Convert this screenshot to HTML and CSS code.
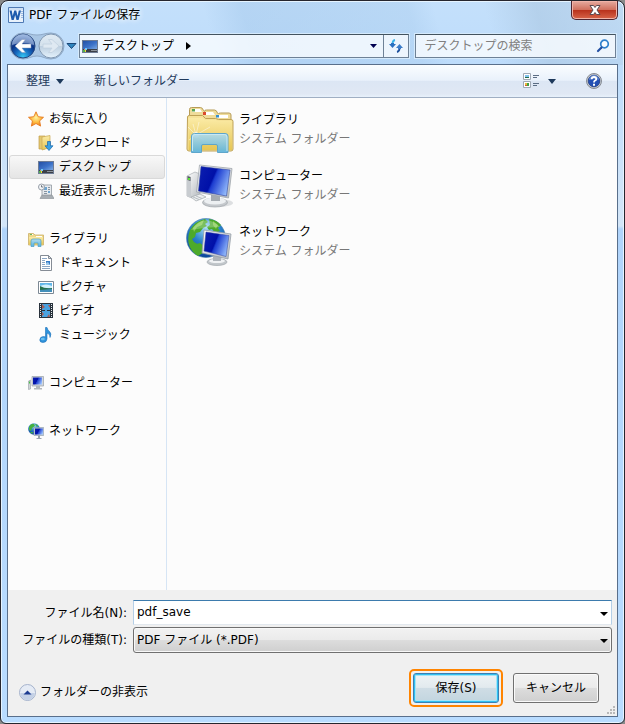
FILE: index.html
```html
<!DOCTYPE html>
<html lang="ja">
<head>
<meta charset="utf-8">
<meta name="viewport" content="width=device-width, initial-scale=1">
<title>PDF ファイルの保存</title>
<link rel="stylesheet" href="styles.css">
</head>
<body>
<svg class="defs" width="0" height="0" aria-hidden="true">
  <defs>
    <linearGradient id="screen" x1="0" y1=".3" x2="1" y2=".7"><stop offset="0" stop-color="#0a1cae"/><stop offset=".42" stop-color="#0010a8"/><stop offset=".48" stop-color="#1c3cd0"/><stop offset="1" stop-color="#9cc4ff"/></linearGradient>
    <linearGradient id="folder" x1="0" y1="0" x2="0" y2="1"><stop offset="0" stop-color="#fbeba6"/><stop offset="1" stop-color="#e6c655"/></linearGradient>
    <linearGradient id="glass" x1="0" y1="0" x2="0" y2="1"><stop offset="0" stop-color="#b4dcea"/><stop offset="1" stop-color="#58b4e2"/></linearGradient>
    <linearGradient id="metal" x1="0" y1="0" x2="1" y2="1"><stop offset="0" stop-color="#fff"/><stop offset="1" stop-color="#b4b9be"/></linearGradient>
    <linearGradient id="desk" x1="0" y1="0" x2="1" y2="1"><stop offset="0" stop-color="#2450a4"/><stop offset=".55" stop-color="#3c72c8"/><stop offset="1" stop-color="#7ba8e2"/></linearGradient>
    <radialGradient id="globe" cx=".5" cy=".25" r=".8"><stop offset="0" stop-color="#a4dcf4"/><stop offset=".45" stop-color="#2a82cc"/><stop offset="1" stop-color="#063a94"/></radialGradient>
    <radialGradient id="back" cx=".5" cy=".95" r=".95"><stop offset="0" stop-color="#35c8f4"/><stop offset=".35" stop-color="#1567bd"/><stop offset=".62" stop-color="#0a3285"/><stop offset="1" stop-color="#7fa3da"/></radialGradient>
    <linearGradient id="fwd" x1="0" y1="0" x2="0" y2="1"><stop offset="0" stop-color="#e0ebf4"/><stop offset=".48" stop-color="#d4e1ec"/><stop offset=".5" stop-color="#bccedf"/><stop offset="1" stop-color="#e4f2fc"/></linearGradient>
    <radialGradient id="star" cx=".5" cy=".4" r=".6"><stop offset="0" stop-color="#fff4a0"/><stop offset=".6" stop-color="#fdb83c"/><stop offset="1" stop-color="#f08024"/></radialGradient>
    <symbol id="i-desktop" viewBox="0 0 16 13"><path fill="#6e7c94" d="M0 0h16v13H0z"/><path fill="url(#desk)" d="M1 1h14v8H1z"/><path fill="#3c4048" d="M1 9h14v3H1z"/><path fill="#8d949c" d="M9 10h6v1H9z"/><path fill="#52b548" d="M1 10h2v2H1z"/><path fill="#f8d33d" d="M3 10h1v2H3z"/><path fill="#ee8a5c" d="M2 9h1v1H2z"/><path fill="#73cbf4" d="M3 8h2v2H3z"/></symbol>
  </defs>
</svg>

<main class="window">
  <header class="titlebar">
    <svg class="word" width="16" height="16" viewBox="0 0 16 16"><path fill="#e8f1fb" stroke="#4f7ab4" d="M.5.5h15v15H.5z"/><path fill="#cfe0f4" d="M1 1h14v2H1z"/><path fill="#9cbbe2" d="M13 4h2v1h-2zM13 6h2v1h-2zM13 8h2v1h-2zM13 10h2v1h-2z"/><path fill="#1f5cae" d="M1.500 3.500h2.200L4.700 9 6.300 3.500h1.900L9.600 9l1.200-5.500H13L10.600 13H8.500L7.200 8 5.700 13H3.600z"/></svg>
    <h1>PDF ファイルの保存</h1>
    <button class="close" type="button" aria-label="閉じる"><svg width="12" height="10" viewBox="0 0 12 10"><path fill="#fff" stroke="#5b4a50" d="M1 .5h3.500L6 2.500 7.500 .5H11L8 5l3 4.500H7.500L6 7.500 4.500 9.500H1L4 5z"/></svg></button>
  </header>

  <nav class="navbar">
    <div class="history">
      <svg class="rail" width="56" height="28" viewBox="0 0 56 28" aria-hidden="true"><path fill="#a9c6e4" stroke="#8fa9c6" d="M14 1C20 1 22 3 28 3S36 1 42 1a13 13 0 0 1 0 26C36 27 34 24 28 24S20 27 14 27A13 13 0 0 1 14 1z"/></svg>
      <button type="button" aria-label="戻る"><svg width="26" height="26" viewBox="0 0 26 26"><circle cx="13" cy="13" r="12" fill="url(#back)" stroke="#26477f"/><path fill="#c7daf2" fill-opacity=".5" d="M2 12a11 11 0 0 1 22 0q-11-4-22 0z"/><path fill="#fff" stroke="#8499bd" stroke-width=".5" d="M5 13l7-6.500h3.500L12 11h9v4h-9l3.500 4.500H12z"/></svg></button>
      <button type="button" aria-label="進む"><svg width="26" height="26" viewBox="0 0 26 26"><circle cx="13" cy="13" r="12" fill="url(#fwd)" stroke="#8198b2"/><path fill="#dfe9f2" stroke="#c2d1df" stroke-width=".8" d="M21 13l-7-6.500h-3.500L14 11H5v4h9l-3.500 4.500H14z"/></svg></button>
      <button class="recent" type="button" aria-label="最近のページ"><svg width="11" height="8" viewBox="0 0 11 8"><path fill="#2f86c0" stroke="#1b4777" d="M1 1.500h9l-4.500 5z"/></svg></button>
    </div>
    <div class="address">
      <svg width="16" height="13"><use href="#i-desktop"/></svg>
      <a href="#desktop">デスクトップ</a>
      <svg class="crumb" width="5" height="8" viewBox="0 0 5 8"><path d="M0 0l5 4-5 4z"/></svg>
      <button class="drop" type="button" aria-label="以前の場所"><svg width="7" height="4" viewBox="0 0 7 4"><path fill="#000050" d="M0 0h7L3.500 4z"/></svg></button>
      <button class="refresh" type="button" aria-label="更新"><svg width="14" height="14" viewBox="0 0 14 14"><path fill="none" stroke="#39b4e8" stroke-width="1.800" d="M6 1Q3.500 1.500 3.500 5"/><path fill="#2a70c0" d="M0 5h2V4h3v1h2L3.500 9z"/><path fill="none" stroke="#1c4f9c" stroke-width="1.800" d="M8 13q2.500-.5 2.500-4"/><path fill="#3c7cc8" d="M7 9h2v1h3V9h2l-3.500-4z"/></svg></button>
    </div>
    <label class="search">
      <input type="search" aria-label="デスクトップの検索" placeholder="デスクトップの検索">
      <svg width="14" height="14" viewBox="0 0 14 14"><circle cx="8.500" cy="5" r="3.800" fill="#fff" fill-opacity=".7" stroke="#2f80cc" stroke-width="1.700"/><path stroke="#234fa2" stroke-width="2.200" stroke-linecap="round" d="M5.500 8.500L2 12"/></svg>
    </label>
  </nav>

  <section class="client">
    <div class="toolbar">
      <button type="button">整理<svg width="8" height="5" viewBox="0 0 8 5"><path fill="#1e395b" d="M0 0h8L4 5z"/></svg></button>
      <button type="button">新しいフォルダー</button>
      <button class="view" type="button" aria-label="表示の変更"><svg width="16" height="16" viewBox="0 0 16 16"><path fill="#fff" stroke="#a0a9b4" d="M.5.5h7v6h-7zM.5 8.500h7v6h-7z"/><path fill="#7ec1ec" d="M2 2h4v2H2z"/><path fill="#246a4a" d="M2 4h4v1H2z"/><path fill="#e7b93c" d="M2 10h2v2H2z"/><path fill="#42a044" d="M4 10h2v3H4z"/><path fill="#d05a38" d="M2 12h2v1H2z"/><path stroke="#5b6d84" d="M10 2.500h6M10 4.500h4M10 10.500h6M10 12.500h4"/></svg><svg width="8" height="5" viewBox="0 0 8 5"><path fill="#1e395b" d="M0 0h8L4 5z"/></svg></button>
      <button class="help" type="button" aria-label="ヘルプ"><svg width="16" height="16" viewBox="0 0 16 16"><circle cx="8" cy="8" r="7.500" fill="#c4c8ce" stroke="#868c95"/><circle cx="8" cy="8" r="5.800" fill="#2350b4" stroke="#1a3680" stroke-width=".7"/><path fill="#7fa6e4" fill-opacity=".6" d="M3 7a5 5 0 0 1 10 0q-5-2-10 0z"/><path fill="none" stroke="#fff" stroke-width="1.800" d="M5.700 6.200Q5.700 4 8 4T10.300 6Q10.300 7 8.800 7.800 8 8.300 8 9.500"/><path fill="#fff" d="M7 10.700h2v2H7z"/></svg></button>
    </div>

    <div class="panes">
      <aside class="tree">
        <section>
          <a class="root" href="#fav"><svg width="16" height="16" viewBox="0 0 16 16"><path fill="url(#star)" stroke="#e57a20" stroke-width=".9" stroke-linejoin="round" d="M8 .8l2.200 4.900 5.300.6-3.900 3.600 1 5.200L8 12.500l-4.600 2.600 1-5.200L.5 6.300l5.300-.6z"/></svg>お気に入り</a>
          <a href="#downloads"><svg width="16" height="16" viewBox="0 0 16 16"><path fill="#e3c870" stroke="#c09c48" stroke-width=".7" d="M1 1h6v13H1z"/><path fill="url(#folder)" stroke="#c9a850" stroke-width=".7" d="M4 2l8-1.500v12L4 15z"/><path fill="#3aa2e6" stroke="#1a65a9" stroke-width=".7" d="M9.500 6.500h3v4.300H15L11 15.500 7 10.800h2.500z"/></svg>ダウンロード</a>
          <a class="selected" href="#desktop" aria-current="true"><svg width="16" height="13"><use href="#i-desktop"/></svg>デスクトップ</a>
          <a href="#recent"><svg width="16" height="16" viewBox="0 0 16 16"><path fill="#e6eaee" stroke="#9098a0" stroke-width=".8" d="M4 2h9.500v10.500H4z"/><path fill="#6ea5d0" d="M6 4h3v3H6zM10 8h2v2h-2z"/><path stroke="#8794a1" d="M10 4.500h2M10 6.500h2M6 8.500h3M6 10.500h3"/><path fill="#a7adb3" stroke="#868d94" stroke-width=".6" d="M4 12h10l2 3.500H2z"/><circle cx="3.500" cy="4" r="3" fill="#f4f6f8" stroke="#979fa8"/><path fill="none" stroke="#525b66" stroke-width=".8" d="M3.500 2.200V4h1.700"/></svg>最近表示した場所</a>
        </section>
        <section>
          <a class="root" href="#libraries"><svg width="16" height="16" viewBox="0 0 16 16"><path fill="#efd98a" stroke="#cbb068" stroke-width=".8" d="M.5 4V2.500h5L7 4h8.500v10H.5z"/><path fill="#fff" d="M2 3h3v1H2zM8 5h6v1H8z"/><path fill="#69b75e" d="M2 3h2v1H2z"/><path fill="url(#folder)" d="M1 6h14v7.500H1z"/><path fill="url(#glass)" stroke="#4ea0c8" stroke-width=".7" d="M3 15.500V10q0-2 2-2h6q2 0 2 2v5.500h-3V12H6v3.500z"/></svg>ライブラリ</a>
          <a href="#documents"><svg width="16" height="16" viewBox="0 0 16 16"><path fill="#fff" stroke="#858c95" d="M2.500.5h8l3 3v12h-11z"/><path fill="#dde3ea" stroke="#858c95" d="M10.500.5v3h3z"/><path stroke="#8ba6c4" d="M4 3.500h5M4 5.500h3M4 7.500h3M4 9.500h3M4 11.500h8M4 13.500h8"/><path fill="#367cc7" d="M8 6h4v4H8z"/><path fill="#9cc8ec" d="M8 8l2-1 2 3H8z"/></svg>ドキュメント</a>
          <a href="#pictures"><svg width="16" height="13" viewBox="0 0 16 13"><path fill="#fff" stroke="#7c8894" d="M.5.5h15v12H.5z"/><path fill="#62b7ea" d="M2 2h12v9H2z"/><path fill="#d2f0fb" d="M2 5q6-3 12 0v2H2z"/><path fill="#26714d" d="M2 5q5 3 12 2v2H2z"/><path fill="#438fba" d="M2 9l12-1v3H2z"/></svg>ピクチャ</a>
          <a href="#videos"><svg width="16" height="16" viewBox="0 0 16 16"><path fill="#29323c" d="M1 0h14v15H1z"/><path fill="#4aa2e0" d="M4 1h8v13H4z"/><path fill="#a85c54" d="M4 1l3 3-3 2zM10 2h2v3zM4 9l2 2-2 2zM9 14l2-3 1 3z"/><path fill="#29323c" d="M4 7h3v1H4zM9 7h3v1H9z"/><path stroke="#e4e9ee" stroke-dasharray="1 1" d="M2.500 1v13M13.500 1v13"/></svg>ビデオ</a>
          <a href="#music"><svg width="16" height="16" viewBox="0 0 16 16"><path fill="#2f93dc" stroke="#1e70b9" stroke-width=".6" d="M7.500.5H9q.5 2.500 2.500 4Q14 6.500 12 10.500q.5-3.500-3-4.500V12Q8.500 15.500 5 15.500q-3.200 0-3.200-2.500 0-3.200 3.700-3.500 1.300 0 2 .5z"/><ellipse cx="4.800" cy="12" rx="2" ry="1.200" fill="#6cc0f0"/></svg>ミュージック</a>
        </section>
        <section>
          <a class="root" href="#computer"><svg width="16" height="14" viewBox="0 0 16 14"><path fill="#cfd3d6" stroke="#969da4" stroke-width=".6" d="M.5 5l2-1v9l-2 .5z"/><path fill="#45bd42" d="M1 5.500h1v2H1z"/><path fill="#d4d8dc" stroke="#979fa7" stroke-width=".7" d="M4 .5h11.500v9.500H4z"/><path fill="url(#screen)" d="M5 1.500h9v7H5z"/><path fill="#b1b7bc" d="M8 10h4v2h2v1.500H6V12h2z"/></svg>コンピューター</a>
        </section>
        <section>
          <a class="root" href="#network"><svg width="16" height="16" viewBox="0 0 16 16"><circle cx="6" cy="6" r="5.800" fill="url(#globe)"/><path fill="#45b13f" d="M1 4q2-4 5-3L7 3 4 5 3 8 1 7zM7 1l3 1-1 2zM2 9l3 0-1 2z"/><path fill="#c4ccd4" stroke="#8a9aaa" stroke-width=".6" d="M6 4.500h9.700v8H6z"/><path fill="url(#screen)" d="M7 5.500h8v6H7z"/><path fill="#9aa4ad" d="M10 12.500h2V15h1.500v1H8.500v-1H10z"/></svg>ネットワーク</a>
        </section>
      </aside>

      <ul class="files">
        <li>
          <svg width="48" height="48" viewBox="0 0 48 48"><path fill="#efdc9a" stroke="#b79c58" d="M3.500 40V3.500q0-2 2-2h9q2 0 3 3l1 1V5q0-1 2-1h8q2 0 3 3l1 1q0-1 2-1h8.500q2 0 2 2v31z"/><path fill="#fff" d="M6 3h8l2 3H6zM18 6h9l2 3H18zM31 9h11v3H31z"/><path fill="#57a552" d="M6 3h3v2.500H6z"/><path fill="#db4b2c" d="M17 6h3v3h-3z"/><path fill="#338fd0" d="M30 9h3v2.500h-3z"/><path fill="#f6e298" stroke="#bfa256" d="M1.500 11q0-1.500 2-1.500h13l3 3h10l3 1H45q2 0 2 2V43q0 2-2 2H3q-2 0-2-2z"/><path fill="url(#folder)" d="M2.500 12h14l3 2h10l3 1H46v29H2.500z"/><path stroke="#fff" stroke-opacity=".45" d="M10 29L2 21M10 29l3-13M10 29l14-8M10 29l-7 5M10 29l8 5M10 29L7 18"/><circle cx="10" cy="29" r="3" fill="#fff" fill-opacity=".6"/><path fill="url(#glass)" fill-opacity=".9" stroke="#5ea6cb" d="M5.500 46.500V30q0-2.500 3-2.500H39q3 0 3 2.500v16.500H31.500V40q0-1.500-1.500-1.500H17q-1.500 0-1.500 1.500v6.500z"/><path fill="none" stroke="#c8e8f4" d="M6.500 45V31q0-2.500 2.500-2.500h29.500q2.500 0 2.500 2.500v14"/></svg>
          <div class="meta"><a href="#libraries">ライブラリ</a><span>システム フォルダー</span></div>
        </li>
        <li>
          <svg width="48" height="44" viewBox="0 0 48 44"><ellipse cx="32" cy="39" rx="15" ry="4" fill="#c8cbce" fill-opacity=".6"/><path fill="url(#metal)" stroke="#a8adb2" stroke-width=".7" d="M1 12l8-4 5 2v21l-8 3-5-2z"/><path fill="#c8ccd0" d="M1 12l4 1v21l-4-2z"/><path fill="#555c62" d="M1.500 12l3 1v4l-3-1z"/><path fill="#5be336" d="M2 14h2v2H2z"/><path fill="#eceeef" stroke="#a4a9ae" stroke-width=".7" d="M5 33l9-3 6 3-10 4z"/><path stroke="#b8bec3" d="M7 33l6 2.500M10 32l6 2.500"/><ellipse cx="29" cy="38.500" rx="12.500" ry="4.500" fill="#c4c8cc" stroke="#a2a7ac" stroke-width=".7"/><ellipse cx="29" cy="37" rx="11" ry="3.500" fill="#edf0f2"/><path fill="#a5abb1" d="M25 30h9v7h-9z"/><path fill="url(#metal)" stroke="#a0a6ac" stroke-width=".8" d="M13.500 1L46 4.500 42.500 34l-32-6z"/><path fill="url(#screen)" stroke="#30459f" stroke-width=".6" d="M15 2.500L44 6l-3.500 26L12.500 27z"/></svg>
          <div class="meta"><a href="#computer">コンピューター</a><span>システム フォルダー</span></div>
        </li>
        <li>
          <svg width="48" height="48" viewBox="0 0 48 48"><circle cx="20" cy="20" r="19.500" fill="url(#globe)" stroke="#447da7" stroke-width=".6"/><path fill="#4daa2b" d="M4 12Q9 3 19 1l3 3-3 2 2 2-4 2-3 4-4 1-1 4-3 2 2 3 5 3-1 5-4 3Q-1 26 4 12zM23 1q8 1 12 6l-3 3 2 3-5 2-3-4-3 1-2-3 3-2zM7 27l7-2 5 4-2 6-5 3q-5-3-6-8z"/><path fill="#a3dc64" fill-opacity=".65" d="M7 10q4-6 11-8l-2 5-5 2-3 5zM27 3l5 4-2 4-3-4z"/><path fill="#fff" fill-opacity=".25" d="M5 12Q19-6 34 9 19 9 5 12z"/><ellipse cx="31" cy="44" rx="10" ry="3.500" fill="#c2c7cb" stroke="#a2a8ae" stroke-width=".7"/><ellipse cx="31" cy="43" rx="8" ry="2" fill="#f0f2f4"/><path fill="#adb3b9" d="M27 38h8v5h-8z"/><path fill="url(#metal)" stroke="#949da6" stroke-width=".8" d="M18 12l27 4-3 25-26-6z"/><path fill="url(#screen)" stroke="#30459f" stroke-width=".5" d="M20 14l23 3.500-3 21L18 33z"/></svg>
          <div class="meta"><a href="#network">ネットワーク</a><span>システム フォルダー</span></div>
        </li>
      </ul>
    </div>

    <form class="footer">
      <div class="fields">
        <label for="name">ファイル名(N):</label>
        <div class="combo">
          <input id="name" type="text" value="pdf_save">
          <svg width="8" height="4" viewBox="0 0 8 4"><path d="M0 0h8L4 4z"/></svg>
        </div>
        <label for="type">ファイルの種類(T):</label>
        <div class="combo">
          <select id="type"><option>PDF ファイル (*.PDF)</option></select>
          <svg width="8" height="4" viewBox="0 0 8 4"><path d="M0 0h8L4 4z"/></svg>
        </div>
      </div>
      <div class="actions">
        <button class="toggle" type="button"><svg width="17" height="17" viewBox="0 0 17 17"><circle cx="8.500" cy="8.500" r="8" fill="#e5ebf5" stroke="#a5b3cc"/><path fill="#c4d1e6" d="M1.500 9h14a7 7 0 0 1-14 0z"/><path fill="#1c3c91" d="M4.500 10.500h8l-4-4z"/></svg>フォルダーの非表示</button>
        <div class="highlight"><button class="push primary" type="submit">保存(S)</button></div>
        <button class="push" type="button">キャンセル</button>
      </div>
      <svg class="grip" width="8" height="8" viewBox="0 0 8 8" aria-hidden="true"><path fill="#b8b8b8" d="M6 0h2v2H6zM3 3h2v2H3zM6 3h2v2H6zM0 6h2v2H0zM3 6h2v2H3zM6 6h2v2H6z"/></svg>
    </form>
  </section>
</main>
</body>
</html>
```
FILE: styles.css
```css
* {
  box-sizing: border-box;
}

body {
  margin: 0;
  background: #8a8a8a;
  color: #000;
  font: 12px/18px "DejaVu Sans", "Noto Sans CJK JP", sans-serif;
}

button,
input,
select {
  font: inherit;
  color: inherit;
}

button {
  padding: 0;
  border: 0;
  background: none;
}

a {
  color: inherit;
  text-decoration: none;
}

svg {
  display: block;
  flex: none;
}

.defs {
  position: absolute;
}

.window {
  display: flex;
  flex-direction: column;
  min-height: 100vh;
  padding: 0 6px 6px;
  border: 1px solid #26262e;
  border-radius: 8px 8px 6px 6px;
  box-shadow: inset 0 0 0 1px #e6f4ff;
  background:
    linear-gradient(75deg, transparent 0 34%, #9fc4e866 40%, #a4c8ea55 66%, transparent 70% 78%, #a8c4de88 86%, #b8cfe455) top / 100% 64px no-repeat,
    linear-gradient(#c4e0fb 0, #bddcfb 64px, #d4e6f8 225px, #b0d4fb 228px, #b9dcff);
}

.titlebar {
  display: flex;
  align-items: flex-start;
  height: 28px;
}

.word {
  margin: 6px 5px 0 1px;
}

h1 {
  flex: 1;
  margin: 5px 0 0;
  font: inherit;
  text-shadow: 0 0 6px #fff, 0 0 6px #fff;
}

.close {
  display: flex;
  align-items: center;
  justify-content: center;
  width: 47px;
  height: 19px;
  border: 1px solid #4e2530;
  border-top: 0;
  border-radius: 0 0 5px 5px;
  box-shadow: inset 0 0 0 1px #f0b3a8;
  background: linear-gradient(#e6aba0, #d1715f 48%, #b8301b 50%, #d8654a);
}

.navbar {
  display: flex;
  align-items: center;
  height: 34px;
  margin-bottom: 1px;
  padding: 0 2px 0 1px;
}

.history {
  display: flex;
  align-items: center;
  gap: 2px;
  width: 71px;
  padding-left: 2px;
  position: relative;
}

.rail {
  position: absolute;
  left: 1px;
}

.history button {
  position: relative;
}

.address {
  display: flex;
  align-items: center;
  flex: 1 1 0;
  height: 24px;
  margin-right: 6px;
  border: 1px solid #6e8196;
  border-top-color: #43535f;
  box-shadow: 0 0 0 1px #d5eafc;
  background: #ffffffc0;
}

.address > svg:first-child {
  margin: 0 4px 0 2px;
}

.crumb {
  margin-left: 12px;
}

.drop {
  display: flex;
  align-items: center;
  justify-content: center;
  width: 20px;
  margin-left: auto;
}

.refresh {
  display: flex;
  align-items: center;
  justify-content: center;
  width: 25px;
  height: 100%;
  border-left: 1px solid #6e8196;
}

.search {
  display: flex;
  align-items: center;
  width: 33%;
  height: 24px;
  padding: 0 5px 0 8px;
  border: 1px solid #6e8196;
  border-top-color: #43535f;
  box-shadow: 0 0 0 1px #d5eafc;
  background: #ffffffc0;
}

.search input {
  flex: 1;
  min-width: 0;
  padding: 0;
  border: 0;
  outline: 0;
  background: none;
}

.search input::placeholder {
  color: #808080;
  opacity: 1;
}

.client {
  display: flex;
  flex-direction: column;
  flex: 1;
  border: 1px solid #596f8b;
  background: #fcfcfc;
}

.toolbar {
  display: flex;
  align-items: center;
  height: 33px;
  padding: 0 15px 0 18px;
  border-bottom: 1px solid #a0afc3;
  background: linear-gradient(#fafdff, #e9f1fb 48%, #dce6f4 50%, #e0e8f4 90%, #e8f1fb);
  color: #1e395b;
}

.toolbar button {
  display: flex;
  align-items: center;
  gap: 6px;
  margin-right: 30px;
}

.toolbar .view {
  gap: 9px;
  margin-left: auto;
}

.toolbar .help {
  margin-right: 0;
}

.panes {
  display: flex;
  flex: 1;
}

.tree {
  display: flex;
  flex-direction: column;
  gap: 24px;
  width: 159px;
  padding: 9px 1px 0;
  border-right: 1px solid #d6e5f5;
}

.tree a {
  display: flex;
  align-items: center;
  gap: 5px;
  height: 24px;
  padding-left: 28px;
  border: 1px solid transparent;
  border-radius: 3px;
  white-space: nowrap;
}

.tree .root {
  padding-left: 18px;
}

.tree .selected {
  border-color: #d9d9d9;
  background: linear-gradient(#f8f8f8, #e5e5e5);
}

.files {
  flex: 1;
  margin: 0;
  padding: 4px 0 0 19px;
  list-style: none;
}

.files li {
  display: flex;
  align-items: center;
  gap: 5px;
  height: 56px;
}

.meta {
  display: flex;
  flex-direction: column;
  line-height: 19px;
}

.meta span {
  color: #777;
}

.footer {
  position: relative;
  padding: 10px 5px 9px 11px;
  background: #f0f0f0;
}

.fields {
  display: grid;
  grid-template-columns: 108px 1fr;
  align-items: center;
  gap: 2px 6px;
}

.fields label {
  text-align: right;
  white-space: nowrap;
}

.combo {
  position: relative;
}

.combo input,
.combo select {
  display: block;
  width: 100%;
  height: 25px;
  padding: 0 20px 1px 3px;
  border: 1px solid #b5cfe7;
  border-top-color: #3d7bad;
  border-bottom-color: #e3e9ef;
  outline: 0;
  background: #fff;
}

.combo select {
  height: 26px;
  appearance: none;
  border-color: #707070;
  border-radius: 3px;
  box-shadow: inset 0 0 0 1px #f8f8f8;
  background: linear-gradient(#f2f2f2, #ebebeb 48%, #dddddd 50%, #cfcfcf);
}

.combo svg {
  position: absolute;
  top: 12px;
  right: 4px;
  pointer-events: none;
}

.actions {
  display: flex;
  align-items: center;
  gap: 10px;
  margin-top: 16px;
  padding-right: 13px;
}

.toggle {
  display: flex;
  align-items: center;
  gap: 4px;
  margin: 8px auto 0 0;
}

.highlight {
  padding: 2px;
  border: 2px solid #ff8400;
  border-radius: 5px;
}

.push {
  width: 86px;
  height: 30px;
  border: 1px solid #707070;
  border-radius: 3px;
  box-shadow: inset 0 0 0 1px #fafafa;
  background: linear-gradient(#f2f2f2, #ebebeb 48%, #dddddd 50%, #cfcfcf);
}

.primary {
  display: block;
  border-color: #3c7fb1;
  box-shadow: inset 0 0 0 1px #30c0f0, inset 0 0 0 2px #a4e4f8;
  background: linear-gradient(#eef3f5, #e2eaee 48%, #cfdde5 50%, #c2d5df);
}

.grip {
  position: absolute;
  right: 2px;
  bottom: 2px;
}
```
